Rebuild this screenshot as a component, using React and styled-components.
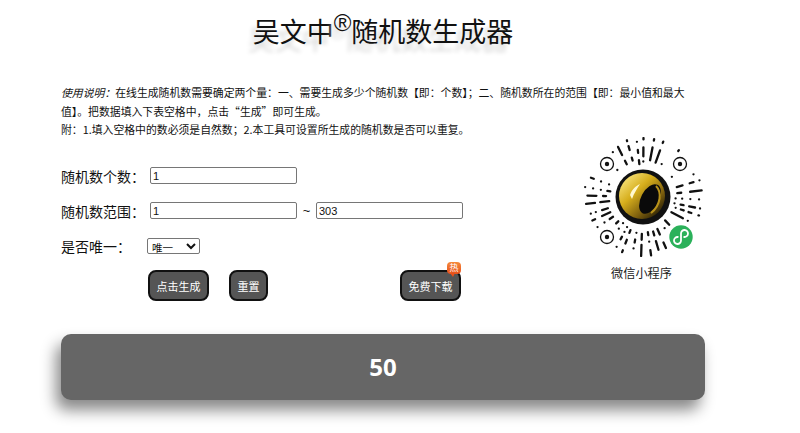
import styled, { createGlobalStyle } from 'styled-components';

const GlobalStyle = createGlobalStyle`
  body {
    margin: 0;
    background: #fff;
    color: #111;
    font-family: "Microsoft YaHei", "Noto Sans CJK SC", "Liberation Sans", sans-serif;
  }
`;

const Page = styled.div`
  width: 800px;
  height: 433px;
  overflow: hidden;
  padding: 0 95px 0 61px;
  box-sizing: border-box;
`;
const Title = styled.h1`
  margin: 0;
  height: 83px;
  padding-top: 9px;
  box-sizing: border-box;
  font-size: 27px;
  line-height: 44px;
  font-weight: 400;
  text-align: center;
  text-shadow: -5px 8px 4px #d8d8d8;
  white-space: nowrap;
  sup {
    font-size: 24px;
    line-height: 0;
    vertical-align: 11px;
    font-family: "Liberation Sans", sans-serif;
    font-weight: 400;
  }
`;
const Notice = styled.div`
  font-size: 10.85px;
  line-height: 18.5px;
  height: 60px;
  em { font-style: italic; }
`;
const Middle = styled.div`
  display: flex;
  justify-content: space-between;
  height: 191px;
`;
const Form = styled.div`
  display: flex;
  flex-direction: column;
  padding-top: 23px;
`;
const Row = styled.div`
  display: flex;
  align-items: center;
  height: 19px;
  margin-bottom: 16px;
  font-size: 14px;
`;
const Label = styled.label`
  width: ${(p) => p.$width || 89}px;
  white-space: nowrap;
`;
const Field = styled.input`
  width: 147px;
  height: 17px;
  box-sizing: border-box;
  padding: 1px 2px;
  border: 1px solid #767676;
  border-radius: 2px;
  font-family: "Liberation Sans", sans-serif;
  font-size: 11px;
  color: #111;
  background: #fff;
`;
const Tilde = styled.span`
  width: 19px;
  text-align: center;
  font-family: "Liberation Sans", sans-serif;
  font-size: 13px;
`;
const Choice = styled.select`
  width: 53px;
  height: 16px;
  padding: 0;
  border: 1px solid #767676;
  border-radius: 2px;
  background: #fff;
  font-size: 10.5px;
  font-family: inherit;
  color: #111;
`;
const Buttons = styled.div`
  display: flex;
  padding-left: 87px;
  margin-top: -1px;
`;
const Btn = styled.button`
  position: relative;
  width: ${(p) => p.$width}px;
  height: 31px;
  margin-left: ${(p) => p.$gap || 0}px;
  padding: 0;
  border: 2px solid #111;
  border-radius: 8px;
  background: #555;
  color: #fff;
  font-family: inherit;
  font-size: 11px;
`;
const Hot = styled.span`
  position: absolute;
  top: -10px;
  right: -2px;
  width: 14px;
  height: 12px;
  border-radius: 4px;
  background: linear-gradient(#f58a3c, #e8501a);
  color: #fff;
  font-size: 9px;
  line-height: 12px;
  text-align: center;
  &::after {
    content: '';
    position: absolute;
    left: 3px;
    bottom: -3px;
    border-top: 4px solid #e8501a;
    border-left: 3px solid transparent;
    border-right: 2px solid transparent;
  }
`;
const Aside = styled.div`
  width: 120px;
  margin-top: -6px;
  margin-right: 2px;
  display: flex;
  flex-direction: column;
  align-items: center;
`;
const QrLabel = styled.div`
  margin-top: 8px;
  margin-right: 3px;
  font-size: 12.2px;
  line-height: 16px;
  color: #222;
`;
const Result = styled.div`
  height: 66px;
  border-radius: 10px;
  background: #666;
  box-shadow: -5px 10px 15px #888;
  color: #fff;
  font-family: "Open Sans", "Noto Sans", sans-serif;
  font-size: 24px;
  font-weight: 700;
  line-height: 66px;
  text-align: center;
`;

const FINDERS = [[24, 27], [97, 27], [24, 100]];
const BADGE = [98, 100];

// radial dashes of the mini program code
function buildSpokes() {
  const out = [];
  let seed = 217;
  const next = () => {
    seed = (seed * 9301 + 49297) % 233280;
    return seed / 233280;
  };
  const lengths = [0, 0, 0, 3, 4, 6, 9, 13];
  const count = 40;
  for (let i = 0; i < count; i++) {
    const a = (i / count) * Math.PI * 2 + next() * 0.05;
    const cx = Math.cos(a);
    const cy = Math.sin(a);
    let r = 32 + next() * 6;
    while (r < 59) {
      const len = Math.min(lengths[Math.floor(next() * lengths.length)], 59 - r);
      const mid = r + len / 2;
      const x = 60 + cx * mid;
      const y = 60 + cy * mid;
      const blocked =
        FINDERS.some(([fx, fy]) => Math.hypot(x - fx, y - fy) < 11 + len / 2) ||
        Math.hypot(x - BADGE[0], y - BADGE[1]) < 14 + len / 2;
      if (!blocked) {
        out.push({
          x1: 60 + cx * r,
          y1: 60 + cy * r,
          x2: 60 + cx * (r + len),
          y2: 60 + cy * (r + len),
        });
      }
      r += len + 5 + next() * 4;
    }
  }
  return out;
}

function Finder({ x, y }) {
  return (
    <>
      <circle cx={x} cy={y} r="6.5" fill="none" stroke="#111" strokeWidth="1.3" />
      <circle cx={x} cy={y} r="2.2" fill="#111" />
    </>
  );
}

function MiniCode() {
  return (
    <svg width="120" height="120" viewBox="0 0 120 120">
      <defs>
        <linearGradient id="gold" x1="0.1" y1="0.1" x2="0.9" y2="0.95">
          <stop offset="0" stopColor="#f7e27a" />
          <stop offset="0.35" stopColor="#d6ae1c" />
          <stop offset="0.7" stopColor="#7d5f0e" />
          <stop offset="1" stopColor="#1c1604" />
        </linearGradient>
      </defs>
      <g stroke="#111" strokeWidth="2.3" strokeLinecap="round">
        {buildSpokes().map((s, i) => (
          <line key={i} x1={s.x1} y1={s.y1} x2={s.x2} y2={s.y2} />
        ))}
      </g>
      {FINDERS.map(([x, y]) => (
        <Finder key={x + '-' + y} x={x} y={y} />
      ))}
      <circle cx="60" cy="60" r="27.5" fill="#111" />
      <circle cx="59" cy="59" r="23" fill="url(#gold)" />
      <ellipse cx="67" cy="62" rx="9" ry="16" transform="rotate(28 67 62)" fill="#0a0a0a" />
      <path d="M73 49 C79 55 78 68 68 76" fill="none" stroke="#b8921a" strokeWidth="2" />
      <path d="M47 58 C49 52 53 49 57 47 C54 52 51 56 49 62 Z" fill="#fff8d0" />
      <circle cx={BADGE[0]} cy={BADGE[1]} r="11.7" fill="#2bb15a" />
      <path
        d="M94.8 100 A3.5 3.5 0 1 0 98 103.5 V96.5 A3.5 3.5 0 1 1 101.2 100"
        fill="none"
        stroke="#fff"
        strokeWidth="1.8"
        strokeLinecap="round"
      />
    </svg>
  );
}

export default function App() {
  return (
    <Page>
      <GlobalStyle />
      <Title>
        吴文中<sup>®</sup>随机数生成器
      </Title>
      <Notice>
        <em>使用说明：</em>在线生成随机数需要确定两个量：一、需要生成多少个随机数【即：个数】；二、随机数所在的范围【即：最小值和最大值】。把数据填入下表空格中，点击“生成”即可生成。
        <br />
        附：1.填入空格中的数必须是自然数；2.本工具可设置所生成的随机数是否可以重复。
      </Notice>
      <Middle>
        <Form>
          <Row>
            <Label>随机数个数：</Label>
            <Field defaultValue="1" />
          </Row>
          <Row>
            <Label>随机数范围：</Label>
            <Field defaultValue="1" />
            <Tilde>~</Tilde>
            <Field defaultValue="303" />
          </Row>
          <Row>
            <Label $width={86}>是否唯一：</Label>
            <Choice defaultValue="唯一">
              <option>唯一</option>
              <option>不唯一</option>
            </Choice>
          </Row>
          <Buttons>
            <Btn $width={61}>点击生成</Btn>
            <Btn $width={39} $gap={20}>重置</Btn>
            <Btn $width={61} $gap={132}>
              免费下载
              <Hot>热</Hot>
            </Btn>
          </Buttons>
        </Form>
        <Aside>
          <MiniCode />
          <QrLabel>微信小程序</QrLabel>
        </Aside>
      </Middle>
      <Result>50</Result>
    </Page>
  );
}
